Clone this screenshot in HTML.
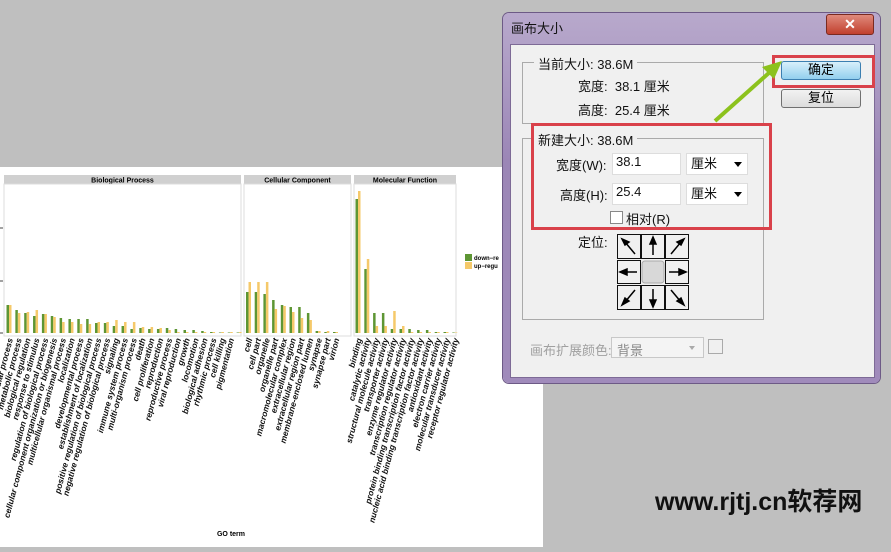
<!DOCTYPE html>
<html><head><meta charset="utf-8"><style>
body{margin:0;width:891px;height:547px;background:#bfbfbf;position:relative;overflow:hidden;font-family:"Liberation Sans","Noto Sans CJK SC",sans-serif}
.a{position:absolute}
#chart{left:0;top:167px;width:543px;height:380px;background:#fff}
.dlg{left:503px;top:13px;width:377px;height:370px;background:linear-gradient(#b8a9cc,#9b86b6 40%,#a08bbb);border-radius:6px;box-shadow:0 0 0 1px #6d5a86}
.inner{left:7px;top:31px;width:363px;height:332px;background:#f0f0f0;border:1px solid #7d6a96}
.t{font-size:13px;color:#111;white-space:nowrap}
.grp{border:1px solid #aaa;}
.lbl{background:#f0f0f0;padding:0 4px}
.inp{background:#fff;border:1px solid #ddd;}
.btn{border:1px solid #707070;border-radius:3px;background:linear-gradient(#f2f2f2,#dcdcdc);text-align:center;font-size:13px;line-height:16px}
</style></head><body>
<div class="a" id="chart"><svg id="sv" width="543" height="380" xmlns="http://www.w3.org/2000/svg"></svg></div>

<div class="a dlg">
 <div class="a t" style="left:8px;top:5px">画布大小</div>
 <div class="a" style="left:323px;top:1px;width:46px;height:19px;background:linear-gradient(#e08a7c,#c1402e);border:1px solid #7a2a20;border-radius:3px;color:#fff;text-align:center;font-weight:bold;font-size:14px;line-height:18px">✕</div>
 <div class="a inner"></div>
</div>
<div class="a grp" style="left:522px;top:62px;width:240px;height:60px"></div>
<div class="a t lbl" style="left:534px;top:54px">当前大小: 38.6M</div>
<div class="a t" style="left:578px;top:76px">宽度:&nbsp; 38.1 厘米</div>
<div class="a t" style="left:578px;top:100px">高度:&nbsp; 25.4 厘米</div>
<div class="a grp" style="left:522px;top:138px;width:240px;height:180px"></div>
<div class="a t lbl" style="left:534px;top:130px">新建大小: 38.6M</div>
<div class="a t" style="left:556px;top:155px">宽度(W):</div>
<div class="a inp" style="left:612px;top:153px;width:67px;height:20px"></div>
<div class="a t" style="left:616px;top:154px">38.1</div>
<div class="a inp" style="left:686px;top:153px;width:60px;height:20px"></div>
<div class="a t" style="left:691px;top:153px">厘米</div><div class="a" style="left:734px;top:162px;border:4px solid transparent;border-top:5px solid #000"></div>
<div class="a t" style="left:560px;top:185px">高度(H):</div>
<div class="a inp" style="left:612px;top:183px;width:67px;height:20px"></div>
<div class="a t" style="left:616px;top:184px">25.4</div>
<div class="a inp" style="left:686px;top:183px;width:60px;height:20px"></div>
<div class="a t" style="left:691px;top:183px">厘米</div><div class="a" style="left:734px;top:192px;border:4px solid transparent;border-top:5px solid #000"></div>
<div class="a" style="left:610px;top:211px;width:11px;height:11px;border:1px solid #888;background:#fff"></div>
<div class="a t" style="left:626px;top:209px">相对(R)</div>
<div class="a" style="left:531px;top:123px;width:235px;height:101px;border:3px solid #d9414a"></div>
<div class="a t" style="left:578px;top:232px">定位:</div>
<div class="a" style="left:617px;top:234px;width:72px;height:76px">
<svg width="72" height="76" xmlns="http://www.w3.org/2000/svg">
<g fill="#f0f0f0" stroke="#111"><rect x="0.5" y="0.5" width="23" height="24"/><rect x="24.5" y="0.5" width="23" height="24"/><rect x="48.5" y="0.5" width="23" height="24"/><rect x="0.5" y="26.5" width="23" height="23"/><rect x="48.5" y="26.5" width="23" height="23"/><rect x="0.5" y="51.5" width="23" height="24"/><rect x="24.5" y="51.5" width="23" height="24"/><rect x="48.5" y="51.5" width="23" height="24"/></g>
<rect x="25" y="27" width="22" height="22" rx="3" fill="#d8d8d8" stroke="#aaa"/>
<g stroke="#000" stroke-width="1.5" fill="#000">
<line x1="18" y1="20" x2="8" y2="8"/><polygon points="5,5 12,8 8,11"/>
<line x1="36" y1="21" x2="36" y2="7"/><polygon points="36,3 33,10 39,10"/>
<line x1="54" y1="20" x2="64" y2="8"/><polygon points="67,5 60,8 64,11"/>
<line x1="20" y1="38" x2="6" y2="38"/><polygon points="3,38 10,35 10,41"/>
<line x1="52" y1="38" x2="66" y2="38"/><polygon points="69,38 62,35 62,41"/>
<line x1="18" y1="56" x2="8" y2="68"/><polygon points="5,71 8,64 12,67"/>
<line x1="36" y1="55" x2="36" y2="69"/><polygon points="36,73 33,66 39,66"/>
<line x1="54" y1="56" x2="64" y2="68"/><polygon points="67,71 64,64 60,67"/>
</g></svg></div>
<div class="a btn" style="left:781px;top:61px;width:78px;height:17px;background:linear-gradient(#d8f0fb,#93cfee);border-color:#3c7fb1">确定</div>
<div class="a" style="left:772px;top:55px;width:97px;height:27px;border:3px solid #d9414a"></div>
<div class="a btn" style="left:781px;top:89px;width:78px;height:17px">复位</div>
<svg class="a" style="left:700px;top:55px" width="90" height="75" xmlns="http://www.w3.org/2000/svg"><line x1="15" y1="66" x2="70" y2="17" stroke="#8cc21d" stroke-width="4"/><polygon points="82,6 62,12 74,24" fill="#8cc21d"/></svg>
<div class="a t" style="left:530px;top:340px;color:#a0a0a0">画布扩展颜色:</div>
<div class="a" style="left:611px;top:337px;width:91px;height:19px;border:1px solid #c8c8c8;background:#f4f4f4"></div>
<div class="a t" style="left:617px;top:340px;color:#888">背景</div>
<div class="a" style="left:689px;top:346px;border:3px solid transparent;border-top:4px solid #aaa"></div>
<div class="a" style="left:708px;top:339px;width:13px;height:13px;border:1px solid #aaa"></div>
<div class="a" style="left:655px;top:482px;font-size:25px;font-weight:bold;color:#111;font-family:'Liberation Sans','Noto Sans CJK SC',sans-serif">www.rjtj.cn软荐网</div>
<script>
const sv=document.getElementById('sv');let h='';const B=166;
function panel(x0,w,title,start,step,down,up,labels){
 h+=`<rect x="${x0}" y="8" width="${w}" height="9" fill="#d0d0d0"/><text x="${x0+w/2}" y="15.5" font-size="7" font-weight="bold" text-anchor="middle" font-family="Liberation Sans">${title}</text>`;
 h+=`<rect x="${x0}" y="17" width="${w}" height="${B-17+3}" fill="none" stroke="#ddd"/>`;
 for(let i=0;i<down.length;i++){const c=start+i*step;
  h+=`<rect x="${c-2.5}" y="${B-down[i]}" width="2.5" height="${down[i]}" fill="#5e9634"/><rect x="${c}" y="${B-up[i]}" width="2.5" height="${up[i]}" fill="#f5c96a"/>`;
  h+=`<text transform="translate(${c+4},${B+6}) rotate(-75)" font-size="8.4" font-weight="bold" font-style="italic" text-anchor="end" fill="#111" font-family="Liberation Sans">${labels[i]}</text>`;}
}
panel(4,237,'Biological Process',9,8.85,
[28,23,20,17,19,17,15,14,14,14,10,10,7,7,4,5,4,4,5,4,3,3,2,1,0.5,0.5,0.5],
[28,20,21,23,19,16,11,11,9,9,11,11,13,11,11,6,6,5,3,1,1,1,1,1,1,1,1],
['cellular process','metabolic process','biological regulation','response to stimulus','regulation of biological process','cellular component organization or biogenesis','multicellular organismal process','localization','developmental process','establishment of localization','positive regulation of biological process','negative regulation of biological process','signaling','immune system process','multi-organism process','death','cell proliferation','reproduction','reproductive process','viral reproduction','growth','locomotion','biological adhesion','rhythmic process','cell killing','pigmentation','']);
panel(244,107,'Cellular Component',248.5,8.7,[41,41,39,33,28,26,26,20,2,1,1],[51,51,51,24,27,21,15,13,2,2,1],
['cell','cell part','organelle','organelle part','macromolecular complex','extracellular region','extracellular region part','membrane-enclosed lumen','synapse','synapse part','virion','virion part']);
panel(354,102,'Molecular Function',358,8.8,[134,64,20,20,4,4,4,3,3,1,1,0.5],[142,74,7,7,22,7,1,1,1,1,1,0.5],
['binding','catalytic activity','structural molecule activity','transporter activity','enzyme regulator activity','transcription regulator activity','protein binding transcription factor activity','nucleic acid binding transcription factor activity','antioxidant activity','electron carrier activity','molecular transducer activity','receptor regulator activity']);
[61,114,166].forEach(y=>h+=`<line x1="0" y1="${y}" x2="3" y2="${y}" stroke="#444"/>`);
h+=`<rect x="465" y="87" width="7" height="7" fill="#5e9634"/><rect x="465" y="95" width="7" height="7" fill="#f5c96a"/><text x="474" y="93" font-size="6" font-weight="bold" font-family="Liberation Sans">down−re</text><text x="474" y="101" font-size="6" font-weight="bold" font-family="Liberation Sans">up−regu</text>`;
h+=`<text x="231" y="369" font-size="7" font-weight="bold" text-anchor="middle" font-family="Liberation Sans">GO term</text>`;
sv.innerHTML=h;
</script>
</body></html>
